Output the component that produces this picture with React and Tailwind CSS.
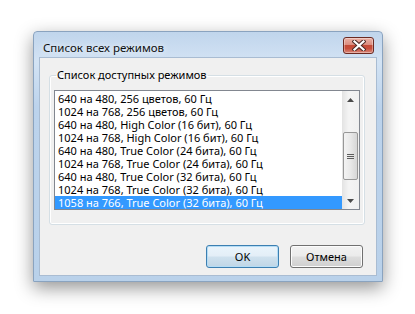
const modes = [
  "640 на 480, 256 цветов, 60 Гц",
  "1024 на 768, 256 цветов, 60 Гц",
  "640 на 480, High Color (16 бит), 60 Гц",
  "1024 на 768, High Color (16 бит), 60 Гц",
  "640 на 480, True Color (24 бита), 60 Гц",
  "1024 на 768, True Color (24 бита), 60 Гц",
  "640 на 480, True Color (32 бита), 60 Гц",
  "1024 на 768, True Color (32 бита), 60 Гц",
  "1058 на 766, True Color (32 бита), 60 Гц",
];

function CloseButton() {
  return (
    <div className="w-[31px] h-[17px] rounded-[3px] border border-[#6b2a22] bg-[linear-gradient(#eab1a6_0%,#dc8e80_45%,#c44b37_46%,#c84f3c_70%,#d98a7c_100%)] flex items-center justify-center shadow-[inset_0_0_0_1px_rgba(255,255,255,0.35)]">
      <svg width="14" height="11" viewBox="0 0 14 11">
        <path d="M2.5 1.5 L11.5 9.5 M11.5 1.5 L2.5 9.5" stroke="#4a2a26" strokeWidth="4.2" strokeLinecap="square" />
        <path d="M2.5 1.5 L11.5 9.5 M11.5 1.5 L2.5 9.5" stroke="#ffffff" strokeWidth="2.2" strokeLinecap="square" />
      </svg>
    </div>
  );
}

function Scrollbar() {
  return (
    <div className="w-[17px] flex flex-col bg-[linear-gradient(90deg,#e3e3e3,#f4f4f4_40%,#f0f0f0)]">
      <div className="h-[17px] flex items-center justify-center">
        <svg width="7" height="4" viewBox="0 0 7 4">
          <path d="M3.5 0 L7 4 L0 4 Z" fill="#4a4a4a" />
        </svg>
      </div>
      <div className="h-[24px]" />
      <div className="mx-auto w-[15px] h-[48px] rounded-[2px] border border-[#979797] bg-[linear-gradient(90deg,#f3f3f3,#e8e8e8_50%,#d6d6d6)] flex flex-col items-center justify-center gap-[1px]">
        <div className="w-[7px] h-[1px] bg-[#5c5c5c]" />
        <div className="w-[7px] h-[1px] bg-[#5c5c5c]" />
        <div className="w-[7px] h-[1px] bg-[#5c5c5c]" />
      </div>
      <div className="flex-1" />
      <div className="h-[17px] flex items-center justify-center">
        <svg width="7" height="4" viewBox="0 0 7 4">
          <path d="M0 0 L7 0 L3.5 4 Z" fill="#4a4a4a" />
        </svg>
      </div>
    </div>
  );
}

function Button({ children, primary }) {
  return (
    <button
      className={
        primary
          ? "w-[73px] h-[23px] rounded-[3px] border border-[#3c7fb1] bg-[linear-gradient(#eaf4fb_0%,#e3eef7_48%,#cfe1ee_52%,#c0d6e6_100%)] shadow-[inset_0_0_0_1px_#b4dcf5] text-black"
          : "w-[73px] h-[23px] rounded-[3px] border border-[#707070] bg-[linear-gradient(#f2f2f2_0%,#ebebeb_48%,#dddddd_52%,#cfcfcf_100%)] shadow-[inset_0_0_0_1px_#fcfcfc] text-black"
      }
    >
      {children}
    </button>
  );
}

export default function App() {
  return (
    <div
      className="w-[415px] h-[314px] bg-white pl-[33px] pt-[31px] text-[11px] leading-[13px] text-black"
      style={{ fontFamily: '"Noto Sans", "Open Sans", sans-serif' }}
    >
      <div className="w-[350px] h-[251px] flex flex-col border border-[#8aa3bf] bg-[linear-gradient(#c0d5ec,#d3e3f4_12%,#bcd3ec_30%,#b9d1ea)] shadow-[0_6px_18px_rgba(0,0,0,0.42)] rounded-t-[4px]">
        <div className="h-[25px] flex items-start justify-between pl-[9px] pr-[8px]">
          <span className="mt-[9px] text-[11.5px] text-[#111] [text-shadow:0_0_6px_#fff]">Список всех режимов</span>
          <div className="mt-[5px]">
            <CloseButton />
          </div>
        </div>
        <div className="mx-[5px] h-[219px] bg-[#f0f0f0] border border-[#a9bcd2] flex flex-col pl-[9px] pr-[11px]">
          <fieldset className="mt-[10px] border border-[#d5dfe5] rounded-[3px] px-[4px] pb-[14px] shadow-[inset_0_0_0_1px_#fff]">
            <legend className="ml-[2px] px-[1px] leading-[14px]">Список доступных режимов</legend>
            <div className="mt-[8px] h-[120px] border border-[#828790] bg-white flex">
              <div className="flex-1 pt-[1px]">
                {modes.map((m, i) => (
                  <div
                    key={i}
                    className={
                      i === modes.length - 1
                        ? "h-[13px] pl-[3px] whitespace-nowrap bg-[#3399ff] text-white"
                        : "h-[13px] pl-[3px] whitespace-nowrap"
                    }
                  >
                    {m}
                  </div>
                ))}
              </div>
              <Scrollbar />
            </div>
          </fieldset>
          <div className="mt-[20px] flex justify-end gap-[11px] pr-[2px]">
            <Button primary>OK</Button>
            <Button>Отмена</Button>
          </div>
        </div>
      </div>
    </div>
  );
}
